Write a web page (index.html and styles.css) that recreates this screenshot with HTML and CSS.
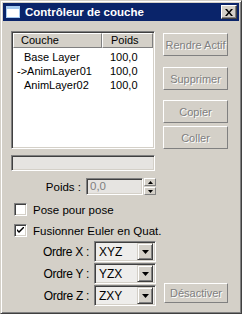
FILE: index.html
```html
<!DOCTYPE html>
<html lang="fr">
<head>
  <meta charset="UTF-8">
  <title>Contrôleur de couche</title>
  <link rel="stylesheet" href="styles.css">
</head>
<body>

  <div class="window">
    <!-- Title bar -->
    <div class="titlebar">
      <svg class="title-icon" width="14" height="12" viewBox="0 0 14 12">
        <rect x="0.5" y="0.5" width="13" height="11" fill="#fff" stroke="#a6caf0"/>
        <rect x="1" y="1" width="12" height="2" fill="#a6caf0"/>
      </svg>
      <span class="title-text">Contrôleur de couche</span>
      <span class="close-btn">
        <svg width="8" height="7" viewBox="0 0 8 7">
          <path d="M0 0h2l2 2.5l2-2.5h2l-3 3.5l3 3.5h-2l-2-2.5l-2 2.5h-2l3-3.5z" fill="#000"/>
        </svg>
      </span>
    </div>

    <div class="panel">
      <div class="top-row">
        <div class="listbox">
          <div class="list-head">
            <div class="col-name">Couche</div>
            <div class="col-weight">Poids</div>
          </div>
          <div class="list-row"><span class="col-name">Base Layer</span><span class="col-weight">100,0</span></div>
          <div class="list-row"><span class="col-name active">-&gt;AnimLayer01</span><span class="col-weight">100,0</span></div>
          <div class="list-row"><span class="col-name">AnimLayer02</span><span class="col-weight">100,0</span></div>
        </div>

        <div class="btn-col">
          <button class="btn btn-rendre" disabled>Rendre Actif</button>
          <button class="btn btn-suppr" disabled>Supprimer</button>
          <button class="btn btn-copier" disabled>Copier</button>
          <button class="btn btn-coller" disabled>Coller</button>
        </div>
      </div>

      <div class="name-bar"></div>

      <div class="weight-row">
        <span class="weight-label">Poids :</span>
        <div class="field weight-field">0,0</div>
        <div class="spinner">
          <span class="spin-up"><svg width="5" height="3" viewBox="0 0 5 3"><path d="M2.5 0L5 3H0z" fill="#000"/></svg></span>
          <span class="spin-down"><svg width="5" height="3" viewBox="0 0 5 3"><path d="M0 0H5L2.5 3z" fill="#000"/></svg></span>
        </div>
      </div>

      <label class="check-row">
        <span class="checkbox"></span>
        <span>Pose pour pose</span>
      </label>
      <label class="check-row second">
        <span class="checkbox">
          <svg width="7" height="7" viewBox="0 0 7 7"><path d="M0 2v2l2 2l5-5v-2l-5 5z" fill="#000"/></svg>
        </span>
        <span>Fusionner Euler en Quat.</span>
      </label>

      <div class="bottom-row">
        <div class="orders">
          <div class="order-row">
            <span class="order-label">Ordre X :</span>
            <div class="combo"><span class="combo-value">XYZ</span><span class="combo-btn"><svg width="7" height="4" viewBox="0 0 7 4"><path d="M0 0H7L3.5 4z" fill="#000"/></svg></span></div>
          </div>
          <div class="order-row">
            <span class="order-label">Ordre Y :</span>
            <div class="combo"><span class="combo-value">YZX</span><span class="combo-btn"><svg width="7" height="4" viewBox="0 0 7 4"><path d="M0 0H7L3.5 4z" fill="#000"/></svg></span></div>
          </div>
          <div class="order-row">
            <span class="order-label">Ordre Z :</span>
            <div class="combo"><span class="combo-value">ZXY</span><span class="combo-btn"><svg width="7" height="4" viewBox="0 0 7 4"><path d="M0 0H7L3.5 4z" fill="#000"/></svg></span></div>
          </div>
        </div>
        <button class="btn btn-desact" disabled>Désactiver</button>
      </div>
    </div>
  </div>

</body>
</html>
```

FILE: styles.css
```css
body {
  margin: 0;
  font-family: "Liberation Sans", Arial, sans-serif;
  font-size: 11px;
  color: #000;
  background: #d4d0c8;
}

/* outer window frame */
.window {
  width: 242px;
  height: 314px;
  box-sizing: border-box;
  background: #d4d0c8;
  border: 1px solid;
  border-color: #d4d0c8 #404040 #404040 #d4d0c8;
  box-shadow: inset 1px 1px #fff, inset -1px -1px #808080;
  padding: 2px;
}

.titlebar {
  height: 18px;
  background: #0a246a;
  display: flex;
  align-items: center;
  padding: 0 2px 0 3px;
}
.title-icon {
  display: block;
  margin-right: 5px;
}
.title-text {
  flex: 1;
  color: #fff;
  font-weight: bold;
  font-size: 11.5px;
}
.close-btn {
  width: 16px;
  height: 14px;
  box-sizing: border-box;
  background: #d4d0c8;
  border: 1px solid;
  border-color: #fff #404040 #404040 #fff;
  box-shadow: inset -1px -1px #808080;
  display: flex;
  align-items: center;
  justify-content: center;
}
.close-btn svg { display: block; }

.panel {
  padding: 10px 0 0 8px;
}

.top-row {
  display: flex;
  gap: 8px;
}

/* sunken box */
.listbox,
.name-bar,
.field,
.combo {
  box-sizing: border-box;
  border: 1px solid;
  border-color: #808080 #fff #fff #808080;
  box-shadow: inset 1px 1px #404040, inset -1px -1px #d4d0c8;
}

.listbox {
  width: 144px;
  height: 118px;
  background: #fff;
  padding: 1px;
}
.list-head {
  display: flex;
  height: 15px;
  margin-bottom: 2px;
}
.list-head div {
  box-sizing: border-box;
  background: #d4d0c8;
  border: 1px solid;
  border-color: #fff #808080 #808080 #fff;
  line-height: 13px;
  padding-left: 7px;
}
.list-head .col-name { width: 89px; }
.list-head .col-weight { flex: 1; padding-left: 8px; }

.list-row {
  display: flex;
  height: 14px;
  line-height: 14px;
}
.list-row .col-name {
  box-sizing: border-box;
  width: 89px;
  padding-left: 11px;
}
.list-row .col-name.active {
  padding-left: 4px;
}
.list-row .col-weight {
  padding-left: 8px;
}

.btn-col {
  display: flex;
  flex-direction: column;
  padding-top: 2px;
}

.btn {
  box-sizing: border-box;
  width: 65px;
  height: 23px;
  padding: 0;
  font-family: inherit;
  font-size: 11px;
  background: #d4d0c8;
  border: 1px solid;
  border-color: #fff #808080 #808080 #fff;
}
.btn:disabled {
  color: #808080;
  text-shadow: 1px 1px #fff;
}
.btn-suppr { margin-top: 11px; }
.btn-copier { margin-top: 10px; }
.btn-coller { margin-top: 3px; }

.name-bar {
  width: 144px;
  height: 16px;
  margin-top: 6px;
  background: #e6e4e1;
}

.weight-row {
  display: flex;
  align-items: center;
  height: 17px;
  margin-top: 7px;
}
.weight-label {
  width: 70px;
  text-align: right;
  font-size: 11.5px;
  margin-right: 5px;
}
.weight-field {
  width: 57px;
  height: 17px;
  background: #e6e4e1;
  color: #808080;
  padding-left: 3px;
  line-height: 15px;
  font-size: 11.5px;
}
.spinner {
  display: flex;
  flex-direction: column;
  margin-left: 1px;
  height: 17px;
}
.spinner span {
  box-sizing: border-box;
  width: 12px;
  height: 8px;
  background: #d4d0c8;
  border: 1px solid;
  border-color: #fff #808080 #808080 #fff;
  display: flex;
  align-items: center;
  justify-content: center;
}
.spinner .spin-down { margin-top: 1px; }
.spinner svg { display: block; }

.check-row {
  display: flex;
  align-items: center;
  gap: 6px;
  margin: 8px 0 0 3px;
  height: 13px;
  font-size: 11.5px;
}
.check-row.second { margin-top: 8px; }

.checkbox {
  box-sizing: border-box;
  width: 13px;
  height: 13px;
  background: #fff;
  border: 1px solid;
  border-color: #808080 #fff #fff #808080;
  box-shadow: inset 1px 1px #404040, inset -1px -1px #d4d0c8;
  display: flex;
  align-items: center;
  justify-content: center;
}
.checkbox svg { display: block; }

.bottom-row {
  display: flex;
  align-items: flex-end;
  margin-top: 4px;
}

.orders {
  display: flex;
  flex-direction: column;
  gap: 1px;
}
.order-row {
  display: flex;
  align-items: center;
}
.order-label {
  width: 78px;
  text-align: right;
  padding-right: 5px;
  font-size: 12px;
  letter-spacing: -0.3px;
}
.combo {
  display: flex;
  align-items: center;
  width: 62px;
  height: 21px;
  background: #eeedeb;
  padding: 2px;
}
.combo-value {
  flex: 1;
  padding-left: 2px;
  font-size: 12px;
}
.combo-btn {
  box-sizing: border-box;
  width: 16px;
  height: 17px;
  background: #d4d0c8;
  border: 1px solid;
  border-color: #d4d0c8 #404040 #404040 #d4d0c8;
  box-shadow: inset 1px 1px #fff, inset -1px -1px #808080;
  display: flex;
  align-items: center;
  justify-content: center;
}
.combo-btn svg { display: block; }

.btn-desact {
  width: 64px;
  height: 20px;
  margin-left: 8px;
  margin-bottom: 3px;
}
```
